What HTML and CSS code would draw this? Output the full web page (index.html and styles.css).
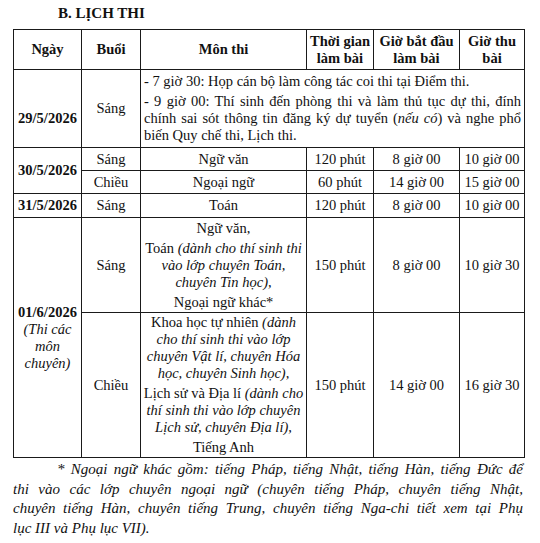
FILE: index.html
```html
<!DOCTYPE html>
<html lang="vi">
<head>
<meta charset="utf-8">
<link rel="stylesheet" href="styles.css">
</head>
<body>
<div class="page">
  <div class="title">B. LỊCH THI</div>
  <table class="sched">
    <colgroup>
      <col class="c-day"><col class="c-ses"><col class="c-sub"><col class="c-dur"><col class="c-start"><col class="c-end">
    </colgroup>
    <tr class="r-head">
      <th>Ngày</th>
      <th>Buổi</th>
      <th>Môn thi</th>
      <th>Thời gian<br>làm bài</th>
      <th>Giờ bắt đầu<br>làm bài</th>
      <th>Giờ thu<br>bài</th>
    </tr>
    <tr class="r-1">
      <td class="day day-low">29/5/2026</td>
      <td>Sáng</td>
      <td colspan="4" class="notes">
        <p class="para">- 7 giờ 30: Họp cán bộ làm công tác coi thi tại Điểm thi.</p>
        <p class="para">
          <span class="ln jl">- 9 giờ 00: Thí sinh đến phòng thi và làm thủ tục dự thi, đính</span>
          <span class="ln jl">chính sai sót thông tin đăng ký dự tuyển (<i>nếu có</i>) và nghe phổ</span>
          <span class="ln">biến Quy chế thi, Lịch thi.</span>
        </p>
      </td>
    </tr>
    <tr class="r-s">
      <td rowspan="2" class="day">30/5/2026</td>
      <td>Sáng</td>
      <td>Ngữ văn</td>
      <td>120 phút</td>
      <td>8 giờ 00</td>
      <td>10 giờ 00</td>
    </tr>
    <tr class="r-s">
      <td>Chiều</td>
      <td>Ngoại ngữ</td>
      <td>60 phút</td>
      <td>14 giờ 00</td>
      <td>15 giờ 00</td>
    </tr>
    <tr class="r-s2">
      <td class="day">31/5/2026</td>
      <td>Sáng</td>
      <td>Toán</td>
      <td>120 phút</td>
      <td>8 giờ 00</td>
      <td>10 giờ 00</td>
    </tr>
    <tr class="r-5">
      <td rowspan="2" class="day"><b>01/6/2026</b><br><i class="sub-note">(Thi các<br>môn<br>chuyên)</i></td>
      <td>Sáng</td>
      <td class="multi">
        <p class="para">Ngữ văn,</p>
        <p class="para">Toán <i>(dành cho thí sinh thi<br>vào lớp chuyên Toán,<br>chuyên Tin học),</i></p>
        <p class="para">Ngoại ngữ khác*</p>
      </td>
      <td>150 phút</td>
      <td>8 giờ 00</td>
      <td>10 giờ 30</td>
    </tr>
    <tr class="r-6">
      <td>Chiều</td>
      <td class="multi">
        <p class="para">Khoa học tự nhiên <i>(dành<br>cho thí sinh thi vào lớp<br>chuyên Vật lí, chuyên Hóa<br>học, chuyên Sinh học),</i></p>
        <p class="para">Lịch sử và Địa lí <i>(dành cho<br>thí sinh thi vào lớp chuyên<br>Lịch sử, chuyên Địa lí),</i></p>
        <p class="para">Tiếng Anh</p>
      </td>
      <td>150 phút</td>
      <td>14 giờ 00</td>
      <td>16 giờ 30</td>
    </tr>
  </table>
  <div class="foot">
    <span class="ln jl indent">* Ngoại ngữ khác gồm: tiếng Pháp, tiếng Nhật, tiếng Hàn, tiếng Đức để</span>
    <span class="ln jl">thi vào các lớp chuyên ngoại ngữ (chuyên tiếng Pháp, chuyên tiếng Nhật,</span>
    <span class="ln jl">chuyên tiếng Hàn, chuyên tiếng Trung, chuyên tiếng Nga-chi tiết xem tại Phụ</span>
    <span class="ln">lục III và Phụ lục VII).</span>
  </div>
</div>
</body>
</html>
```

FILE: styles.css
```css
html, body {
  margin: 0;
  padding: 0;
  background: #fff;
}
body {
  font-family: "Liberation Serif", "Times New Roman", serif;
  color: #111;
  font-size: 14.5px;
}
.page {
  width: 540px;
  padding: 5px 0 0 13px;
  box-sizing: border-box;
}
.title {
  font-weight: bold;
  font-size: 15px;
  line-height: 17px;
  padding-left: 45px;
  margin-bottom: 7px;
}
.sched {
  border-collapse: collapse;
  table-layout: fixed;
  width: 511px;
}
.c-day { width: 68px; }
.c-ses { width: 59px; }
.c-sub { width: 166px; }
.c-dur { width: 67px; }
.c-start { width: 86px; }
.c-end { width: 65px; }
.sched th, .sched td {
  border: 1px solid #1a1a1a;
  padding: 0 3px;
  text-align: center;
  vertical-align: middle;
  line-height: 17px;
  font-weight: normal;
  white-space: nowrap;
}
.sched th {
  font-weight: bold;
}
.r-head > th { height: 39px; }
.r-1 > td { height: 77px; }
.r-s > td { height: 22px; }
.r-s2 > td { height: 23px; }
.r-5 > td { height: 94px; }
.r-6 > td { height: 144px; }
.sched td.day {
  font-weight: bold;
  padding: 0 1px;
}
.r-1 > td.day-low {
  padding-top: 20px;
  height: 57px;
}
.sub-note {
  font-weight: normal;
}
.sched td.notes {
  text-align: left;
  white-space: normal;
}
.para {
  margin: 0 0 3px 0;
}
.para:last-child {
  margin-bottom: 0;
}
.ln {
  display: block;
  text-align: left;
  white-space: nowrap;
}
.jl {
  text-align: justify;
  text-align-last: justify;
}
.sched td.multi {
  padding: 0 1px;
}
.foot {
  width: 510px;
  margin-top: 2px;
  font-style: italic;
  font-size: 15px;
  line-height: 19.5px;
}
.indent {
  text-indent: 44px;
}
```
